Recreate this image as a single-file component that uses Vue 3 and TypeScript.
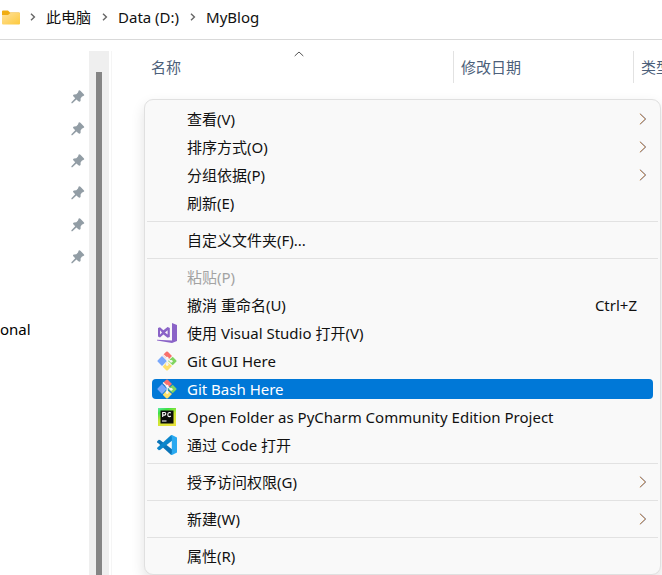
<script setup lang="ts">
type IconName = 'vs' | 'git' | 'pycharm' | 'vscode'

interface MenuItem {
  label: string
  icon?: IconName
  shortcut?: string
  submenu?: boolean
  disabled?: boolean
  active?: boolean
}

const crumbs: string[] = ['此电脑', 'Data (D:)', 'MyBlog']
const pinCount = 6

const groups: MenuItem[][] = [
  [
    { label: '查看(V)', submenu: true },
    { label: '排序方式(O)', submenu: true },
    { label: '分组依据(P)', submenu: true },
    { label: '刷新(E)' },
  ],
  [{ label: '自定义文件夹(F)...' }],
  [
    { label: '粘贴(P)', disabled: true },
    { label: '撤消 重命名(U)', shortcut: 'Ctrl+Z' },
    { label: '使用 Visual Studio 打开(V)', icon: 'vs' },
    { label: 'Git GUI Here', icon: 'git' },
    { label: 'Git Bash Here', icon: 'git', active: true },
    { label: 'Open Folder as PyCharm Community Edition Project', icon: 'pycharm' },
    { label: '通过 Code 打开', icon: 'vscode' },
  ],
  [{ label: '授予访问权限(G)', submenu: true }],
  [{ label: '新建(W)', submenu: true }],
  [{ label: '属性(R)' }],
]
</script>

<template>
  <div class="window">
    <nav class="address">
      <svg class="folder" viewBox="0 0 18 15">
        <defs>
          <linearGradient id="folderFace" x1="0" y1="0" x2="1" y2="1">
            <stop offset="0" stop-color="#ffe19a" />
            <stop offset="1" stop-color="#fdc93c" />
          </linearGradient>
        </defs>
        <path d="M0 1.5Q0 .5 1 .5H6L8 2.500H17Q18 2.500 18 3.500V8H0Z" fill="#f0ad12" />
        <path d="M0 5H6L8.500 3H17.500Q18 3 18 3.500V13.500Q18 14.500 17 14.500H1Q0 14.500 0 13.500Z" fill="url(#folderFace)" />
      </svg>
      <template v-for="crumb in crumbs" :key="crumb">
        <svg class="crumb-arrow" viewBox="0 0 6 8"><path d="M1 .8L4.400 4L1 7.200" /></svg>
        <a href="#" class="crumb">{{ crumb }}</a>
      </template>
    </nav>

    <div class="body">
      <aside class="sidebar">
        <ul class="pins">
          <li v-for="n in pinCount" :key="n">
            <svg class="pin" viewBox="0 0 14 14">
              <path d="M7.700 .6Q8.500 0 9.400 .8L13 4.400Q13.700 5.400 12.700 5.800L10.800 6.700L9.600 8.500V10.700Q8.800 12.300 7.400 11.200L5.400 9.400L1.400 13.200H.4V12.200L4.200 8.200L2.100 6.100Q1.600 4.800 3.100 4.600L5.300 4.200L7 2.600Z" />
            </svg>
          </li>
        </ul>
        <a href="#" class="drive">onal</a>
      </aside>
      <div class="scroll-track"><div class="scroll-thumb"></div></div>
      <main class="files">
        <div class="columns">
          <button type="button" class="column name">
            名称
            <svg class="sort" viewBox="0 0 10 6"><path d="M.7 5L5 1L9.300 5" /></svg>
          </button>
          <button type="button" class="column">修改日期</button>
          <button type="button" class="column kind">类型</button>
        </div>
      </main>
    </div>

    <div class="menu" role="menu">
      <ul v-for="(group, g) in groups" :key="g" class="group" role="group">
        <li v-for="item in group" :key="item.label" class="row" role="none">
          <button
            type="button"
            role="menuitem"
            class="item"
            :class="{ active: item.active }"
            :disabled="item.disabled"
          >
            <span class="slot">
              <svg v-if="item.icon === 'vs'" class="icon" viewBox="0 0 20 20">
                <path d="M15 0L20 2V18L15 20L0 17.500V16.800L15 17.600Z" fill="#8a63c7" />
                <path d="M1 5L3 4.300L6.400 7.200L10.600 4L12.800 5V14L10.600 14.800L6.400 11.600L3 14.500L1 13.500ZM3 7.300V11.500L5 9.400ZM10.600 7.200L8 9.400L10.600 11.600Z" fill="#8a63c7" fill-rule="evenodd" />
              </svg>
              <svg v-else-if="item.icon === 'git'" class="icon" viewBox="0 0 20 20">
                <path d="M5.700 4.300L9.200 .8Q10 0 10.800 .8L15 5L10.700 9.300Z" fill="#f9706c" />
                <path d="M5 5L9.700 9.700V10.300L5 15L.8 10.800Q0 10 .8 9.200Z" fill="#79a8fb" />
                <path d="M15.700 5.700L19.200 9.200Q20 10 19.200 10.800L15.700 14.300L11 10Z" fill="#80d460" />
                <path d="M10 10.700L15 15L10.800 19.200Q10 20 9.200 19.200L5.700 15.700Z" fill="#fde06c" />
                <path d="M6 3.500L10.200 7.500L14.200 10.500M10.200 7.500V13.500" fill="none" stroke="#f4f6f4" stroke-width="1.200" />
                <circle cx="10.200" cy="7.200" r="1.400" fill="#f4f6f4" />
                <circle cx="14.200" cy="10.300" r="1.400" fill="#f4f6f4" />
                <circle cx="10.200" cy="13.500" r="1.400" fill="#f4f6f4" />
              </svg>
              <svg v-else-if="item.icon === 'pycharm'" class="icon" viewBox="0 0 20 20">
                <defs>
                  <linearGradient id="pyEdge" x1="0" y1="0" x2=".5" y2="1">
                    <stop offset="0" stop-color="#5eeaa8" />
                    <stop offset=".25" stop-color="#3fe045" />
                    <stop offset=".6" stop-color="#c8e632" />
                    <stop offset="1" stop-color="#e6e23a" />
                  </linearGradient>
                </defs>
                <path d="M1 1H19V19H1Z" fill="url(#pyEdge)" />
                <path d="M3.500 3.500H16.500V16.500H3.500Z" fill="#0a0d0a" />
                <path d="M5.700 10V5.500H7.500Q8.800 5.500 8.800 6.800T7.500 8.100H5.700M13.800 6Q13.200 5.500 12.400 5.500Q10.800 5.500 10.800 7.600T12.400 9.600Q13.200 9.600 13.800 9M5 14H9.500" fill="none" stroke="#fff" stroke-width="1.100" />
              </svg>
              <svg v-else-if="item.icon === 'vscode'" class="icon" viewBox="0 0 20 20">
                <path d="M0 6.400L1.800 4.800L3 5L15 14.200V20L13.600 19.400L.2 7.200Z" fill="#0a74b8" />
                <path d="M0 13.600L1.800 15.200L3 15L15 5.800V0L13.600 .6L.2 12.800Z" fill="#0c86cb" />
                <path d="M13.800 .4L15 0L20 2.400V17.600L15 20L13.800 19.600L14.800 18V2Z" fill="#2aa9f0" />
              </svg>
            </span>
            <span class="label">{{ item.label }}</span>
            <span v-if="item.shortcut" class="shortcut">{{ item.shortcut }}</span>
            <svg v-if="item.submenu" class="more" viewBox="0 0 8 12">
              <path class="more-warm" d="M.8 .8L6.300 6L.8 11.200" />
              <path class="more-cool" d="M1.300 .8L6.800 6L1.300 11.200" />
            </svg>
          </button>
        </li>
      </ul>
    </div>
  </div>
</template>

<style>
body {
  margin: 0;
  background: #fff;
}
</style>

<style scoped>
.window {
  position: relative;
  display: flex;
  flex-direction: column;
  height: 100vh;
  min-height: 575px;
  overflow: hidden;
  box-sizing: border-box;
  background: #fff;
  color: #111;
  font: 15px/20px "Noto Sans", "Noto Sans CJK SC", sans-serif;
}

ul {
  margin: 0;
  padding: 0;
  list-style: none;
}

button {
  margin: 0;
  padding: 0;
  border: 0;
  background: none;
  color: inherit;
  font: inherit;
  text-align: left;
}

a {
  color: inherit;
  text-decoration: none;
}

svg {
  display: block;
  flex: none;
}

.address {
  display: flex;
  align-items: center;
  height: 34px;
  padding: 0 2px 5px;
  border-bottom: 1px solid #d9d9d9;
}

.folder {
  width: 18px;
  height: 15px;
}

.crumb {
  padding-right: 1px;
}

.crumb-arrow {
  width: 6px;
  height: 8px;
  margin: 0 10px;
}

.crumb-arrow path {
  fill: none;
  stroke: #666;
  stroke-width: 1.4;
}

.body {
  display: flex;
  flex: 1;
  padding-top: 11px;
}

.sidebar {
  width: 89px;
}

.pins {
  padding-top: 30px;
}

.pins li {
  display: flex;
  align-items: center;
  justify-content: flex-end;
  height: 32px;
  padding-right: 4px;
}

.pin {
  width: 14px;
  height: 14px;
  fill: #929da5;
}

.drive {
  display: block;
  margin-top: 46px;
  color: #000;
}

.scroll-track {
  display: flex;
  justify-content: center;
  width: 20px;
  padding-top: 21px;
  box-sizing: border-box;
  background: #efefef;
}

.scroll-thumb {
  width: 6px;
  background: #858585;
}

.files {
  flex: 1;
  min-width: 0;
  margin-left: 2px;
  border-left: 1px solid #f5f5f5;
}

.columns {
  display: grid;
  grid-template-columns: 1fr 180px 29px;
  height: 32px;
  overflow: hidden;
  color: #4c607a;
}

.column {
  position: relative;
  padding-left: 7px;
  border-left: 1px solid #e2e2e2;
  white-space: nowrap;
}

.column.name {
  padding-left: 39px;
  border-left: 0;
}

.column.kind {
  overflow: hidden;
}

.sort {
  position: absolute;
  top: 0;
  left: 182px;
  width: 10px;
  height: 6px;
  fill: none;
  stroke: #555;
}

.menu {
  position: absolute;
  top: 99px;
  right: 1px;
  left: 144px;
  padding: 5px 2px 4px;
  border: 1px solid #e0e0e0;
  border-radius: 9px;
  background: #f9f9f9;
  box-shadow: 0 6px 14px rgba(0, 0, 0, 0.12);
}

.group + .group {
  margin-top: 4px;
  padding-top: 4px;
  border-top: 1px solid #e2e2e2;
}

.row {
  display: flex;
  align-items: center;
  height: 28px;
  padding: 0 5px;
}

.item {
  display: flex;
  flex: 1;
  align-items: center;
  height: 20px;
  padding: 0 5px;
  border-radius: 4px;
  white-space: nowrap;
}

.item.active {
  background: #0078d7;
  color: #fff;
}

.item:disabled {
  color: #a3a3a3;
}

.slot {
  width: 30px;
}

.icon {
  width: 20px;
  height: 20px;
}

.label {
  flex: 1;
}

.shortcut {
  margin-right: 11px;
}

.more {
  width: 8px;
  height: 12px;
  margin-right: 1px;
  fill: none;
}

.more-warm {
  stroke: #e0a050;
}

.more-cool {
  stroke: #5a5a80;
  stroke-width: 0.7;
}
</style>
